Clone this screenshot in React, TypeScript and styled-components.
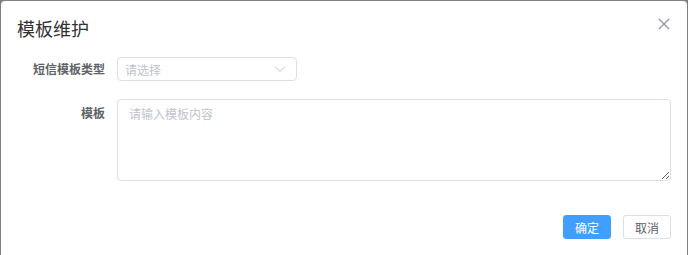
import React from "react";
import styled, { createGlobalStyle } from "styled-components";

const Global = createGlobalStyle`
  html, body { margin: 0; padding: 0; background: #808080; }
  body { font-family: "Noto Sans CJK SC", "Noto Sans", sans-serif; }
  * { box-sizing: border-box; }
`;

const Overlay = styled.div`
  width: 688px;
  height: 255px;
  padding: 1px;
  background: #808080;
`;

const Dialog = styled.div`
  width: 686px;
  height: 254px;
  background: #fff;
  border-radius: 4px 4px 0 0;
  display: flex;
  flex-direction: column;
  position: relative;
`;

const Header = styled.div`
  padding: 15px 16px 10px;
`;

const Title = styled.span`
  font-size: 18px;
  line-height: 24px;
  color: #303133;
`;

const Close = styled.button`
  position: absolute;
  top: 15px;
  right: 15px;
  width: 16px;
  height: 16px;
  padding: 0;
  border: none;
  background: none;
  display: flex;
  align-items: center;
  justify-content: center;
  cursor: pointer;
`;

const Body = styled.div`
  padding: 6px 16px 0;
  display: flex;
  flex-direction: column;
  gap: 18px;
`;

const Row = styled.div<{ $align?: string }>`
  display: flex;
  align-items: ${(p) => p.$align || "center"};
`;

const Label = styled.label<{ $top?: number }>`
  width: 100px;
  flex: none;
  padding-right: 12px;
  text-align: right;
  font-size: 12px;
  font-weight: bold;
  color: #606266;
  line-height: 24px;
  margin-top: ${(p) => p.$top || 0}px;
`;

const Select = styled.div`
  width: 180px;
  height: 24px;
  border: 1px solid #dcdfe6;
  border-radius: 4px;
  display: flex;
  align-items: center;
  justify-content: space-between;
  padding: 0 10px 0 7px;
  font-size: 12px;
  color: #c0c4cc;
`;

const TextArea = styled.textarea`
  flex: 1;
  height: 82px;
  border: 1px solid #dcdfe6;
  border-radius: 4px;
  padding: 5px 11px;
  font-family: inherit;
  font-size: 12px;
  line-height: 1.5;
  color: #606266;
  resize: vertical;
  outline: none;
  &::placeholder { color: #c0c4cc; }
`;

const Footer = styled.div`
  padding: 34px 16px 0;
  display: flex;
  justify-content: flex-end;
  gap: 12px;
`;

const Button = styled.button<{ $primary?: boolean }>`
  width: 48px;
  height: 24px;
  border-radius: 3px;
  font-family: inherit;
  font-size: 12px;
  padding: 0;
  cursor: pointer;
  border: 1px solid ${(p) => (p.$primary ? "#409eff" : "#dcdfe6")};
  background: ${(p) => (p.$primary ? "#409eff" : "#fff")};
  color: ${(p) => (p.$primary ? "#fff" : "#606266")};
`;

export default function App() {
  return (
    <>
      <Global />
      <Overlay>
        <Dialog>
          <Header>
            <Title>模板维护</Title>
          </Header>
          <Close aria-label="close">
            <svg width="12" height="12" viewBox="0 0 12 12">
              <path d="M1 1L11 11M11 1L1 11" stroke="#909399" strokeWidth="1.2" fill="none" />
            </svg>
          </Close>
          <Body>
            <Row>
              <Label>短信模板类型</Label>
              <Select>
                <span>请选择</span>
                <svg width="12" height="8" viewBox="0 0 12 8">
                  <path d="M1 1.5L6 6.5L11 1.5" stroke="#c0c4cc" strokeWidth="1" fill="none" />
                </svg>
              </Select>
            </Row>
            <Row $align="flex-start">
              <Label $top={2}>模板</Label>
              <TextArea placeholder="请输入模板内容" />
            </Row>
          </Body>
          <Footer>
            <Button $primary>确定</Button>
            <Button>取消</Button>
          </Footer>
        </Dialog>
      </Overlay>
    </>
  );
}
